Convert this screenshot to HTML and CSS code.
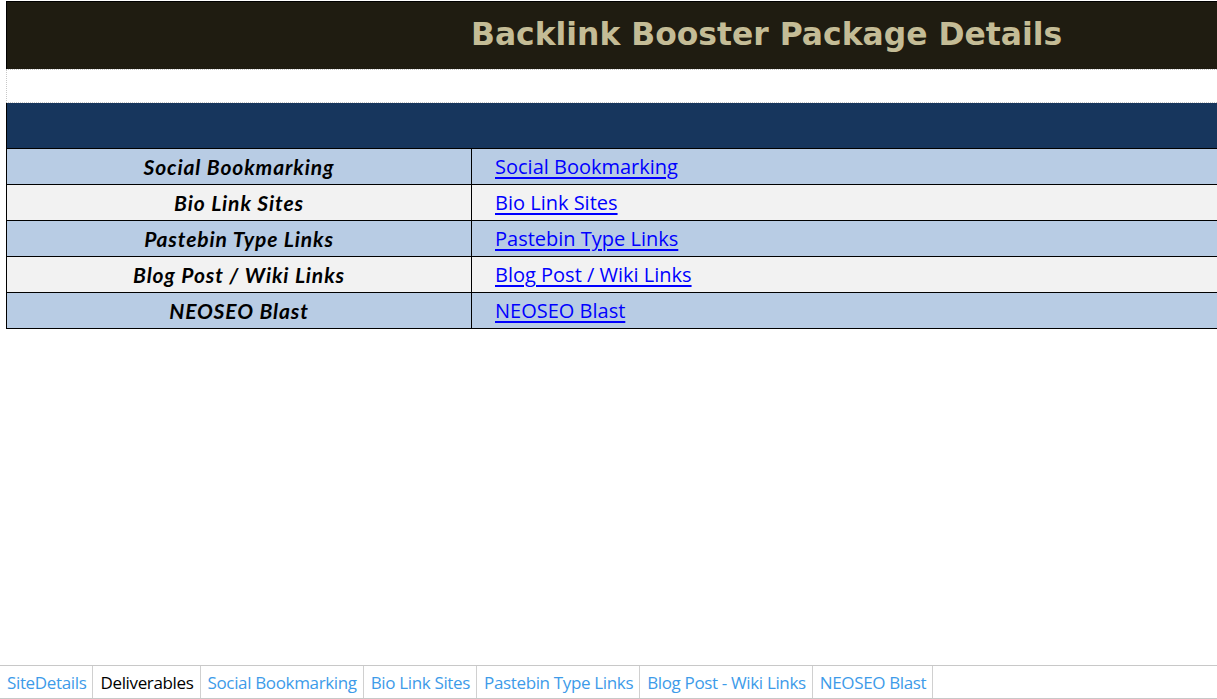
FILE: index.html
```html
<!DOCTYPE html>
<html lang="en">
<head>
  <meta charset="UTF-8">
  <title>Backlink Booster Package Details</title>
  <meta name="viewport" content="width=device-width, initial-scale=1.0">
  <link rel="stylesheet" href="styles.css">
</head>
<body>

  <div class="sheet">
    <div class="title-band">
      <h1>Backlink Booster Package Details</h1>
    </div>
    <div class="spacer"></div>
    <div class="head-band"></div>

    <table class="deliverables">
      <tr class="odd">
        <td class="label">Social Bookmarking</td>
        <td class="link"><a href="#social">Social Bookmarking</a></td>
      </tr>
      <tr class="even">
        <td class="label">Bio Link Sites</td>
        <td class="link"><a href="#bio">Bio Link Sites</a></td>
      </tr>
      <tr class="odd">
        <td class="label">Pastebin Type Links</td>
        <td class="link"><a href="#pastebin">Pastebin Type Links</a></td>
      </tr>
      <tr class="even">
        <td class="label">Blog Post / Wiki Links</td>
        <td class="link"><a href="#blog">Blog Post / Wiki Links</a></td>
      </tr>
      <tr class="odd">
        <td class="label">NEOSEO Blast</td>
        <td class="link"><a href="#neoseo">NEOSEO Blast</a></td>
      </tr>
    </table>
  </div>

  <footer class="tabs">
    <a class="tab" href="#site">SiteDetails</a>
    <a class="tab active" href="#deliverables">Deliverables</a>
    <a class="tab" href="#social">Social Bookmarking</a>
    <a class="tab" href="#bio">Bio Link Sites</a>
    <a class="tab" href="#pastebin">Pastebin Type Links</a>
    <a class="tab" href="#blog">Blog Post - Wiki Links</a>
    <a class="tab" href="#neoseo">NEOSEO Blast</a>
  </footer>

</body>
</html>
```

FILE: styles.css
```css
body {
  margin: 0;
  padding: 0;
  background: #ffffff;
  font-family: "Liberation Sans", Arial, sans-serif;
  height: 699px;
  overflow: hidden;
  position: relative;
}

.sheet {
  padding: 1px 0 0 6px;
}

.title-band {
  background: #1f1c11;
  border-top: 1px solid #000;
  border-left: 1px solid #000;
  height: 67px;
  display: flex;
  align-items: center;
  padding-left: 464px;
}

.title-band h1 {
  margin: 0 0 3px;
  font-family: "DejaVu Sans", sans-serif;
  font-weight: bold;
  font-size: 31.4px;
  color: #c4bc96;
}

.spacer {
  height: 32px;
  border-top: 1px dotted #c8c8c8;
  border-bottom: 1px dotted #c8c8c8;
  border-left: 1px dotted #c8c8c8;
}

.head-band {
  background: #17365d;
  border-left: 1px solid #000;
  height: 45px;
}

.deliverables {
  width: 100%;
  border-collapse: collapse;
}

.deliverables td {
  border: 1px solid #000;
  border-right: none;
  height: 35px;
  padding: 0;
}

.odd td {
  background: #b8cce4;
}

.even td {
  background: #f2f2f2;
}

.label {
  width: 464px;
  text-align: center;
  font-family: "Lato", sans-serif;
  font-weight: bold;
  font-style: italic;
  font-size: 21px;
  letter-spacing: 0.9px;
  color: #000;
}

.link {
  padding-left: 23px !important;
}

.link a {
  font-family: "Open Sans", sans-serif;
  font-size: 20px;
  color: #0000ff;
  text-decoration: underline;
  text-underline-offset: 3px;
}

.tabs {
  position: absolute;
  left: 0;
  right: 0;
  bottom: 0;
  height: 32px;
  border-top: 1px solid #c8c8c8;
  border-bottom: 1px solid #c8c8c8;
  display: flex;
  background: #fff;
}

.tab {
  display: flex;
  align-items: center;
  padding: 0 6px 0 7px;
  border-right: 1px solid #d0d0d0;
  font-family: "Open Sans", sans-serif;
  font-size: 17px;
  letter-spacing: -0.35px;
  color: #3d9be9;
  text-decoration: none;
}

.tab.active {
  color: #000;
}
```
